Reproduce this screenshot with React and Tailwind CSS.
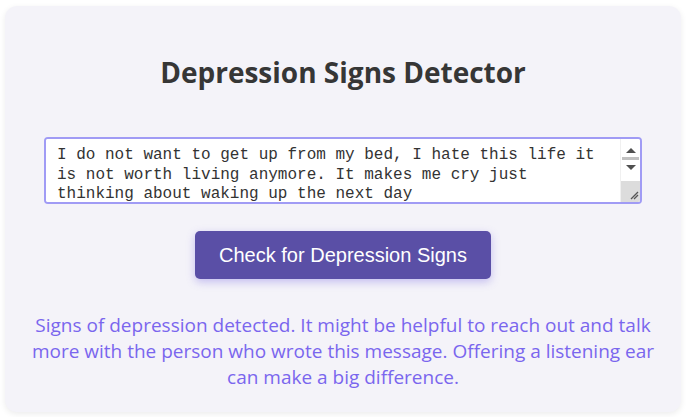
import { useState } from "react";

const sample="I do not want to get up from my bed, I hate this life it is not worth living anymore. It makes me cry just thinking about waking up the next day";

function ScrollBar(){
  return (
    <div className="flex w-[20px] flex-col border-l border-[#f0f0f0] bg-white">
      <div className="flex h-[14px] items-end justify-center pt-[8px]">
        <div className="h-0 w-0 border-x-[5px] border-b-[5px] border-x-transparent border-b-[#505050]" />
      </div>
      <div className="mx-[1px] mt-[4px] h-[3px] bg-[#c1c1c1]" />
      <div className="flex h-[14px] items-center justify-center">
        <div className="h-0 w-0 border-x-[5px] border-t-[5px] border-x-transparent border-t-[#505050]" />
      </div>
      <div className="flex-1" />
      <div className="relative h-[21px] bg-[#dcdcdc]">
        <svg width="20" height="21" viewBox="0 0 20 21" className="absolute left-0 top-0">
          <path d="M10 18 L17 11 M13 18 L17 14" stroke="#555" strokeWidth="1.3" />
        </svg>
      </div>
    </div>
  );
}

export default function App(){
  const [text,setText]=useState(sample);

  return (
    <div className="min-h-[417px] bg-white px-[5px] pt-[6px]" style={{fontFamily:'"Open Sans", "Noto Sans", sans-serif'}}>
      <div className="flex w-[676px] flex-col items-center rounded-xl bg-[#f4f3f9] px-[16px] pb-[22px] pt-[49px] shadow-[0_2px_6px_rgba(0,0,0,0.08)]">
        <h1 className="text-[28px] font-bold leading-[34px] text-[#363636]">Depression Signs Detector</h1>

        <div className="mt-[48px] flex h-[67px] w-[598px] overflow-hidden rounded-[4px] border-2 border-[#a09bf5] bg-white">
          <textarea
            value={text}
            onChange={(e)=>setText(e.target.value)}
            className="flex-1 resize-none overflow-hidden bg-white pb-[3px] pl-[11px] pr-[16px] pt-[7px] text-[16px] leading-[19.5px] text-[#333] outline-none"
            style={{fontFamily:'"Liberation Mono", "DejaVu Sans Mono", monospace'}}
          />
          <ScrollBar />
        </div>

        <button
          className="mt-[27px] h-[48px] rounded-[5px] bg-[#5a4fa6] px-6 text-[20px] text-white shadow-[0_3px_8px_rgba(106,90,220,0.35)]"
          style={{fontFamily:'"Liberation Sans", Arial, sans-serif'}}
        >
          Check for Depression Signs
        </button>

        <p className="mt-[33px] text-center text-[19px] leading-[26px] text-[#7a66ee]">
          Signs of depression detected. It might be helpful to reach out and talk more with the person who wrote this message. Offering a listening ear can make a big difference.
        </p>
      </div>
    </div>
  );
}
